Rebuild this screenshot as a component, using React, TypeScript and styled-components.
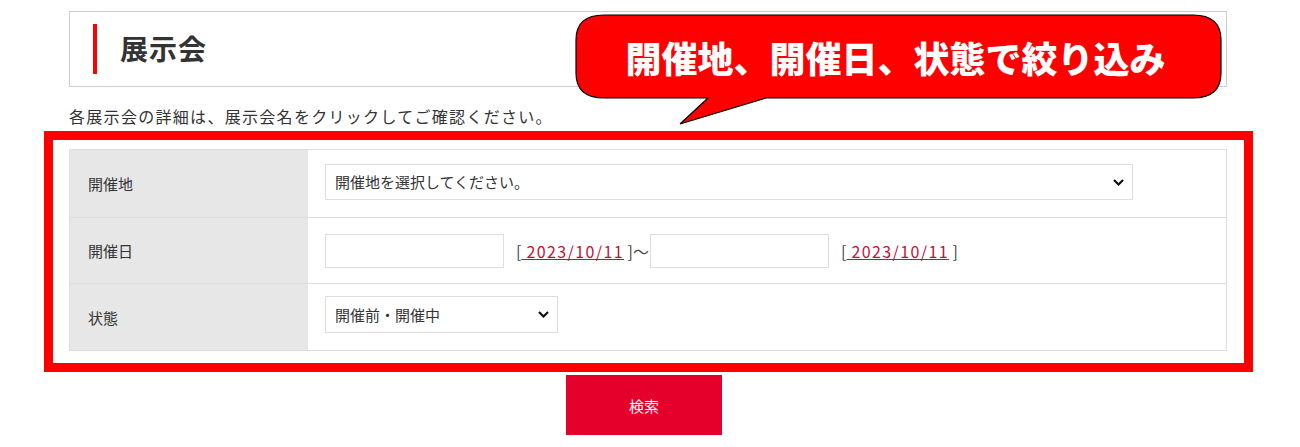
import React from 'react';
import styled, { createGlobalStyle } from 'styled-components';

const GlobalStyle = createGlobalStyle`
  body {
    margin: 0;
    background: #fff;
    color: #333;
    font-family: "Noto Sans CJK JP", "Noto Sans", sans-serif;
  }
`;

const Page = styled.div`
  position: relative;
  width: 1209px;
  padding: 11px 0 0 44px;
`;

const Header = styled.div`
  box-sizing: border-box;
  display: flex;
  align-items: center;
  height: 76px;
  margin: 0 26px 0 25px;
  border: 1px solid #ccc;
`;

const Accent = styled.span`
  width: 4px;
  height: 50px;
  margin-left: 23px;
  background: #f00;
`;

const Title = styled.h1`
  margin: 0 0 2px 23px;
  font-size: 28px;
  font-weight: 700;
  letter-spacing: 1px;
  color: #333;
`;

const Lead = styled.p`
  margin: 17px 0 0 25px;
  font-size: 16px;
  line-height: 24px;
  letter-spacing: 1.3px;
  color: #333;
`;

const Frame = styled.div`
  margin-top: 3px;
  padding: 9px 17px 12px 16px;
  border: 9px solid #f00;
`;

const Table = styled.div`
  display: grid;
  grid-template-columns: 237px 1fr;
  border: 1px solid #ddd;
  border-bottom: none;
`;

const Label = styled.div<{ $h: number }>`
  display: flex;
  align-items: center;
  height: ${p => p.$h}px;
  padding-left: 18px;
  background: #e7e7e7;
  border-bottom: 1px solid #ddd;
  font-size: 15px;
  color: #333;
`;

const Value = styled.div<{ $h: number }>`
  display: flex;
  align-items: center;
  height: ${p => p.$h}px;
  padding-left: 17px;
  border-bottom: 1px solid #ddd;
  border-left: 1px solid #e6e6e6;
  font-size: 15px;
`;

const SelectBox = styled.div<{ $w: number; $h: number; $lift: number }>`
  position: relative;
  width: ${p => p.$w}px;
  height: ${p => p.$h}px;
  margin-bottom: ${p => p.$lift}px;
`;

const Select = styled.select`
  appearance: none;
  box-sizing: border-box;
  width: 100%;
  height: 100%;
  padding: 0 30px 0 9px;
  border: 1px solid #ddd;
  border-radius: 0;
  background: #fff;
  color: #333;
  font-family: inherit;
  font-size: 15px;
  outline: none;
`;

const Chevron = styled.svg`
  position: absolute;
  right: 9px;
  top: 50%;
  margin-top: -3px;
  pointer-events: none;
`;

const DateInput = styled.input`
  box-sizing: border-box;
  width: 179px;
  height: 34px;
  border: 1px solid #ddd;
  font-family: inherit;
  font-size: 15px;
  outline: none;
`;

const Today = styled.span`
  margin-left: 12px;
  color: #444;
  font-size: 16px;
`;

const DateLink = styled.a`
  color: #c3103a;
  text-decoration: underline;
  letter-spacing: 1.4px;
`;

const ButtonRow = styled.div`
  display: flex;
  justify-content: center;
  width: 1150px;
  margin: 3px 0 0 25px;
`;

const SearchButton = styled.button`
  width: 156px;
  height: 60px;
  border: none;
  background: #e4002b;
  color: #fff;
  font-family: inherit;
  font-size: 15px;
`;

const Callout = styled.div`
  position: absolute;
  left: 574px;
  top: 13px;
  width: 650px;
  height: 114px;
`;

const CalloutText = styled.span`
  position: absolute;
  left: 2px;
  top: 2px;
  width: 645px;
  height: 83px;
  display: flex;
  align-items: center;
  justify-content: center;
  padding-right: 6px;
  box-sizing: border-box;
  color: #fff;
  font-size: 36px;
  font-weight: 900;
`;

const ChevronIcon = () => (
  <Chevron width="11" height="7" viewBox="0 0 11 7">
    <path d="M1 1 L5.5 5.5 L10 1" fill="none" stroke="#111" strokeWidth="2.2" />
  </Chevron>
);

const DateRange = () => (
  <>
    <DateInput type="text" />
    <Today>[<DateLink href="#"> 2023/10/11</DateLink> ]～</Today>
    <DateInput type="text" style={{ marginLeft: 1 }} />
    <Today>[<DateLink href="#"> 2023/10/11</DateLink> ]</Today>
  </>
);

export default function App() {
  return (
    <>
      <GlobalStyle />
      <Page>
        <Header>
          <Accent />
          <Title>展示会</Title>
        </Header>
        <Lead>各展示会の詳細は、展示会名をクリックしてご確認ください。</Lead>
        <Frame>
          <Table>
            <Label $h={67}>開催地</Label>
            <Value $h={67}>
              <SelectBox $w={808} $h={36} $lift={4}>
                <Select defaultValue="">
                  <option value="">開催地を選択してください。</option>
                </Select>
                <ChevronIcon />
              </SelectBox>
            </Value>
            <Label $h={65}>開催日</Label>
            <Value $h={65}>
              <DateRange />
            </Value>
            <Label $h={66}>状態</Label>
            <Value $h={66}>
              <SelectBox $w={233} $h={37} $lift={6}>
                <Select defaultValue="before">
                  <option value="before">開催前・開催中</option>
                </Select>
                <ChevronIcon />
              </SelectBox>
            </Value>
          </Table>
        </Frame>
        <ButtonRow>
          <SearchButton type="button">検索</SearchButton>
        </ButtonRow>
        <Callout>
          <svg width="650" height="114" viewBox="0 0 650 114">
            <path
              d="M30 2 H619 Q647 2 647 27 V60 Q647 85 619 85 H192 L106 111 L134 85 H30 Q2 85 2 60 V27 Q2 2 30 2 Z"
              fill="#f00"
              stroke="#000"
              strokeWidth="1.2"
            />
          </svg>
          <CalloutText>開催地、開催日、状態で絞り込み</CalloutText>
        </Callout>
      </Page>
    </>
  );
}
